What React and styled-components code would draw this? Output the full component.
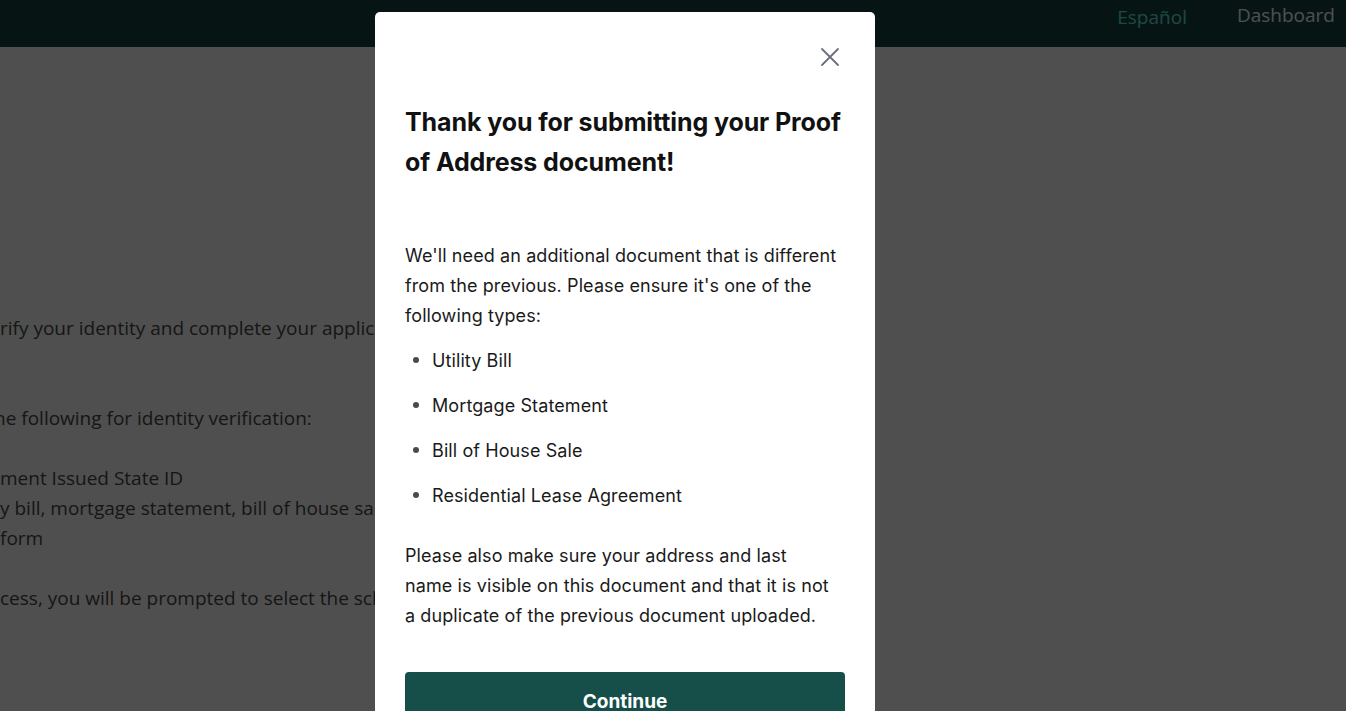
import React from "react";
import styled, { createGlobalStyle } from "styled-components";

const Global = createGlobalStyle`
  html, body { margin: 0; padding: 0; }
  body {
    width: 1346px;
    height: 711px;
    overflow: hidden;
    background: #ffffff;
    font-family: "Open Sans", "Noto Sans", sans-serif;
  }
`;

const Page = styled.div`
  height: 711px;
  display: flex;
  flex-direction: column;
`;

const Header = styled.header`
  height: 47px;
  background: #16433f;
  display: flex;
  justify-content: flex-end;
  align-items: flex-start;
  gap: 50px;
  padding-right: 11px;
`;

const NavLink = styled.a`
  font-size: 19px;
  line-height: 30px;
  color: ${(p) => (p.accent ? "#5ee7db" : "#ffffff")};
  text-decoration: none;
  margin-top: ${(p) => (p.accent ? "2px" : "0")};
`;

const Content = styled.main`
  flex: 1;
  padding-top: 266px;
  color: #484848;
  font-size: 19px;
  line-height: 30px;
  white-space: nowrap;
`;

const Line = styled.div`
  margin-top: ${(p) => p.gap || 0}px;
  margin-left: ${(p) => p.shift || 0}px;
`;

const Overlay = styled.div`
  position: fixed;
  inset: 0;
  background: rgba(0, 0, 0, 0.69);
  display: flex;
  align-items: flex-start;
`;

const Modal = styled.div`
  width: 500px;
  margin: 12px 0 0 375px;
  background: #ffffff;
  border-radius: 5px;
  padding: 31px 30px 40px;
  box-sizing: border-box;
  font-family: Inter, "Liberation Sans", Arial, sans-serif;
  color: #111111;
`;

const CloseRow = styled.div`
  display: flex;
  justify-content: flex-end;
  padding-right: 1px;
`;

const CloseButton = styled.button`
  border: 0;
  background: transparent;
  padding: 0;
  width: 28px;
  height: 28px;
  display: flex;
  align-items: center;
  justify-content: center;
  cursor: pointer;
`;

const Title = styled.h2`
  margin: 31px 0 0;
  font-size: 25px;
  line-height: 40px;
  font-weight: 700;
  letter-spacing: -0.1px;
`;

const Text = styled.p`
  margin: ${(p) => p.top || 0}px 0 0;
  max-width: ${(p) => p.maxWidth || "none"};
  font-size: 18px;
  line-height: 30px;
  color: #1a1a1a;
  letter-spacing: 0.1px;
`;

const List = styled.ul`
  margin: 15px 0 0;
  padding: 0 0 0 8px;
  list-style: none;
  font-size: 18px;
  line-height: 30px;
  color: #1a1a1a;
  letter-spacing: 0.1px;
`;

const Item = styled.li`
  display: flex;
  align-items: center;
  gap: 13px;
  margin-bottom: 15px;
  &:last-child {
    margin-bottom: 30px;
  }
  &::before {
    content: "";
    width: 6px;
    height: 6px;
    border-radius: 50%;
    background: #4a4a4a;
    margin-top: -3px;
  }
`;

const Primary = styled.button`
  margin-top: 41px;
  width: 100%;
  height: 58px;
  border: 0;
  border-radius: 4px;
  background: #164e4a;
  color: #ffffff;
  font-family: Inter, "Liberation Sans", Arial, sans-serif;
  font-size: 19px;
  font-weight: 700;
  cursor: pointer;
`;

const docs = [
  "Utility Bill",
  "Mortgage Statement",
  "Bill of House Sale",
  "Residential Lease Agreement",
];

export default function App() {
  return (
    <>
      <Global />
      <Page>
        <Header>
          <NavLink accent href="#">Español</NavLink>
          <NavLink href="#">Dashboard</NavLink>
        </Header>
        <Content>
          <Line>rify your identity and complete your application, please upload</Line>
          <Line gap={60} shift={-6}>he following for identity verification:</Line>
          <Line gap={30}>ment Issued State ID</Line>
          <Line>y bill, mortgage statement, bill of house sale, or residential lease</Line>
          <Line>form</Line>
          <Line gap={30}>cess, you will be prompted to select the school</Line>
        </Content>
      </Page>
      <Overlay>
        <Modal role="dialog">
          <CloseRow>
            <CloseButton aria-label="Close">
              <svg width="20" height="20" viewBox="0 0 20 20" fill="none" stroke="#6b6d80" strokeWidth="1.8" strokeLinecap="round">
                <path d="M2 2L18 18M18 2L2 18" />
              </svg>
            </CloseButton>
          </CloseRow>
          <Title>Thank you for submitting your Proof of Address document!</Title>
          <Text top={59}>
            We'll need an additional document that is different from the previous. Please ensure it's one of the following types:
          </Text>
          <List>
            {docs.map((d) => (
              <Item key={d}>{d}</Item>
            ))}
          </List>
          <Text top={0} maxWidth="430px">
            Please also make sure your address and last name is visible on this document and that it is not a duplicate of the previous document uploaded.
          </Text>
          <Primary>Continue</Primary>
        </Modal>
      </Overlay>
    </>
  );
}
